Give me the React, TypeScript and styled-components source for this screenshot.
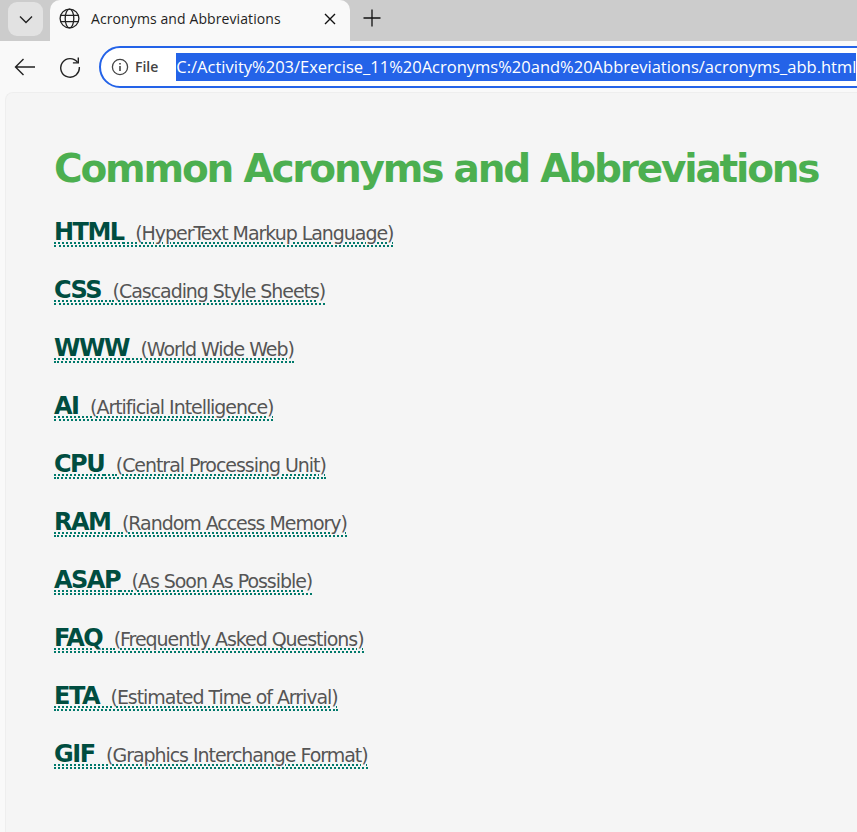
import React from 'react';
import styled, { createGlobalStyle } from 'styled-components';

const ACRONYMS = [
  { abbr: 'HTML', full: 'HyperText Markup Language' },
  { abbr: 'CSS', full: 'Cascading Style Sheets' },
  { abbr: 'WWW', full: 'World Wide Web' },
  { abbr: 'AI', full: 'Artificial Intelligence' },
  { abbr: 'CPU', full: 'Central Processing Unit' },
  { abbr: 'RAM', full: 'Random Access Memory' },
  { abbr: 'ASAP', full: 'As Soon As Possible' },
  { abbr: 'FAQ', full: 'Frequently Asked Questions' },
  { abbr: 'ETA', full: 'Estimated Time of Arrival' },
  { abbr: 'GIF', full: 'Graphics Interchange Format' },
];

const URL = 'C:/Activity%203/Exercise_11%20Acronyms%20and%20Abbreviations/acronyms_abb.html';

const App: React.FC = () => {
  return (
    <>
      <GlobalStyle />
      <Window>
        <TabStrip>
          <TabSearch>
            <svg width="16" height="16" viewBox="0 0 16 16" fill="none" stroke="#222" strokeWidth="1.4">
              <path d="M2 5.5 L8 11.5 L14 5.5" />
            </svg>
          </TabSearch>
          <Tab>
            <svg width="21" height="21" viewBox="0 0 21 21" fill="none" stroke="#222" strokeWidth="1.3">
              <circle cx="10.5" cy="10.5" r="9.4" />
              <ellipse cx="10.5" cy="10.5" rx="4.3" ry="9.4" />
              <path d="M1.6 7.4 H19.4 M1.6 13.6 H19.4" />
            </svg>
            <TabTitle>Acronyms and Abbreviations</TabTitle>
            <svg width="12" height="12" viewBox="0 0 12 12" fill="none" stroke="#111" strokeWidth="1.4">
              <path d="M1 1 L11 11 M11 1 L1 11" />
            </svg>
          </Tab>
          <NewTab>
            <svg width="18" height="18" viewBox="0 0 18 18" fill="none" stroke="#111" strokeWidth="1.3">
              <path d="M9 0.5 V17.5 M0.5 9 H17.5" />
            </svg>
          </NewTab>
        </TabStrip>
        <Toolbar>
          <NavButton>
            <svg width="22" height="18" viewBox="0 0 22 18" fill="none" stroke="#222" strokeWidth="1.4">
              <path d="M21 9 H1.5 M9.5 1 L1.5 9 L9.5 17" />
            </svg>
          </NavButton>
          <NavButton>
            <svg width="22" height="22" viewBox="0 0 22 22" fill="none" stroke="#222" strokeWidth="1.4">
              <path d="M18.6 6.5 A9.3 9.3 0 1 0 20.3 11" />
              <path d="M19.3 1.5 V6.9 H13.9" />
            </svg>
          </NavButton>
          <AddressBar>
            <InfoIcon>
              <svg width="18" height="18" viewBox="0 0 18 18" fill="none" stroke="#444" strokeWidth="1.3">
                <circle cx="9" cy="9" r="7.6" />
                <path d="M9 8 V13" strokeWidth="1.6" />
                <path d="M9 4.9 V6.5" strokeWidth="1.6" />
              </svg>
            </InfoIcon>
            <FileLabel>File</FileLabel>
            <SelectedUrl>{URL}</SelectedUrl>
          </AddressBar>
        </Toolbar>
        <Frame>
          <Page>
            <Heading>Common Acronyms and Abbreviations</Heading>
            {ACRONYMS.map((item) => (
              <Entry key={item.abbr}>
                <Abbr>
                  <Short>{item.abbr}</Short> <Full>({item.full})</Full>
                </Abbr>
              </Entry>
            ))}
          </Page>
        </Frame>
      </Window>
    </>
  );
};

const GlobalStyle = createGlobalStyle`
  html, body {
    margin: 0;
    padding: 0;
    height: 100%;
    overflow: hidden;
    background: #f9f9f9;
  }
`;

const Window = styled.div`
  width: 857px;
  height: 832px;
  display: flex;
  flex-direction: column;
  overflow: hidden;
  font-family: 'Open Sans', 'Noto Sans', sans-serif;
`;

const TabStrip = styled.div`
  height: 41px;
  flex: none;
  display: flex;
  background: #cccccc;
`;

const TabSearch = styled.div`
  width: 35px;
  height: 34px;
  margin: 2px 0 0 8px;
  border-radius: 9px;
  background: #e2e2e2;
  display: flex;
  align-items: center;
  justify-content: center;
`;

const Tab = styled.div`
  width: 300px;
  height: 41px;
  margin-left: 7px;
  padding: 0 14px 4px 9px;
  box-sizing: border-box;
  border-radius: 10px 10px 0 0;
  background: #f9f9f9;
  display: flex;
  align-items: center;
`;

const TabTitle = styled.span`
  flex: 1;
  margin-left: 11px;
  font-size: 14px;
  letter-spacing: 0.1px;
  color: #1f1f1f;
  white-space: nowrap;
`;

const NewTab = styled.div`
  width: 44px;
  padding-bottom: 5px;
  display: flex;
  align-items: center;
  justify-content: center;
`;

const Toolbar = styled.div`
  height: 51px;
  flex: none;
  display: flex;
  align-items: center;
  background: #f9f9f9;
`;

const NavButton = styled.div`
  width: 45px;
  height: 40px;
  flex: none;
  display: flex;
  align-items: center;
  justify-content: center;
  &:first-child {
    margin-left: 2px;
  }
`;

const AddressBar = styled.div`
  height: 42px;
  width: 900px;
  flex: none;
  margin-left: 7px;
  padding-left: 10px;
  box-sizing: border-box;
  border: 2px solid #2463e8;
  border-radius: 21px;
  background: #ffffff;
  display: flex;
  align-items: center;
`;

const InfoIcon = styled.div`
  display: flex;
  align-items: center;
`;

const FileLabel = styled.span`
  margin-left: 6px;
  font-size: 14px;
  font-weight: 600;
  color: #444444;
`;

const SelectedUrl = styled.span`
  margin-left: 18px;
  height: 28px;
  line-height: 28px;
  font-size: 16.5px;
  color: #ffffff;
  background: #2463e8;
  white-space: nowrap;
`;

const Frame = styled.div`
  flex: 1;
  padding: 0 0 0 5px;
  background: #f9f9f9;
`;

const Page = styled.div`
  height: 100%;
  padding: 51px 0 0 48px;
  box-sizing: border-box;
  border-radius: 8px 0 0 0;
  border: solid #eeeeee;
  border-width: 1px 0 0 1px;
  background: #f5f5f5;
  font-family: 'DejaVu Sans', Verdana, sans-serif;
`;

const Heading = styled.h1`
  margin: 0 0 24px;
  font-size: 39px;
  line-height: 50px;
  font-weight: 700;
  color: #4caf50;
  white-space: nowrap;
  letter-spacing: -2.2px;
`;

const Entry = styled.p`
  margin: 0;
  height: 58px;
`;

const Abbr = styled.abbr`
  font-size: 19px;
  word-spacing: 5.5px;
  padding-bottom: 1px;
  border-bottom: 2px dotted #00796b;
  text-decoration: underline dotted #00796b;
  text-decoration-thickness: 2px;
  text-underline-offset: 2px;
`;

const Short = styled.span`
  font-size: 24px;
  font-weight: 700;
  color: #004d40;
  letter-spacing: -1.5px;
  word-spacing: 0;
`;

const Full = styled.span`
  font-size: 19px;
  color: #555555;
  letter-spacing: -1.05px;
  word-spacing: 0;
`;

export default App;
